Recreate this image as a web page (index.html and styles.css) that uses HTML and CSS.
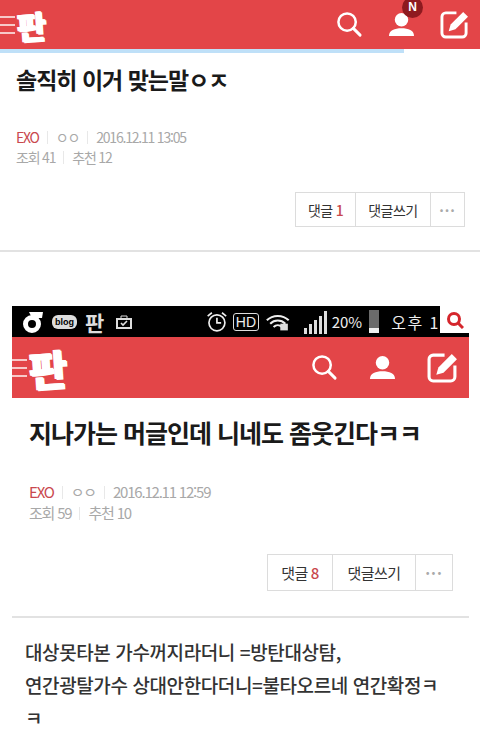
FILE: index.html
```html
<!DOCTYPE html>
<html lang="ko">
<head>
  <meta charset="UTF-8">
  <title>판</title>
  <link rel="stylesheet" href="styles.css">
</head>
<body>

<header class="topbar">
  <div class="brand">
    <div class="burger"><i></i><i></i><i></i></div>
    <span class="logo">판</span>
  </div>
  <div class="tools">
    <svg class="tool" viewBox="0 0 28 28"><circle cx="11.5" cy="11.5" r="9" fill="none" stroke="#fff" stroke-width="2.6"/><path d="M18 18l7 7" stroke="#fff" stroke-width="3" stroke-linecap="round"/></svg>
    <div class="user">
      <svg class="tool" viewBox="0 0 28 28"><circle cx="14" cy="9" r="7" fill="#fff"/><path d="M1 26c0-6 6-8 13-8s13 2 13 8z" fill="#fff"/></svg>
      <span class="badge">N</span>
    </div>
    <svg class="tool tool-edit" viewBox="0 0 30 30"><path d="M17 3H6a4 4 0 0 0-4 4v17a4 4 0 0 0 4 4h17a4 4 0 0 0 4-4V13" fill="none" stroke="#fff" stroke-width="3"/><path d="M9 22l2-7L24 2l5 5-13 13z" fill="#fff"/></svg>
  </div>
</header>
<div class="progress"></div>

<section class="post">
  <h1 class="title">솔직히 이거 맞는말ㅇㅈ</h1>
  <div class="meta">
    <div><span class="cat">EXO</span><span class="sep"></span><span>ㅇㅇ</span><span class="sep"></span><span>2016.12.11 13:05</span></div>
    <div><span>조회 41</span><span class="sep"></span><span>추천 12</span></div>
  </div>
  <div class="actions">
    <span class="btn btn-count">댓글 <b>1</b></span>
    <span class="btn btn-write">댓글쓰기</span>
    <span class="btn btn-more">···</span>
  </div>
</section>

<section class="shot">
  <div class="statusbar">
    <div class="status-left">
      <svg class="carrier" viewBox="0 0 24 24"><path d="M12 5a9 9 0 1 0 0 18 9 9 0 0 0 0-18zm0 5a4 4 0 1 1 0 8 4 4 0 0 1 0-8z" fill="#fff"/><path d="M9 2h14l-1 6H12z" fill="#fff"/></svg>
      <span class="blog">blog</span>
      <span class="mini">판</span>
      <svg class="sicon" viewBox="0 0 18 18"><path d="M2 6h14v9H2z" fill="none" stroke="#ddd" stroke-width="2"/><path d="M6 3h6v3H6z" fill="none" stroke="#ddd"/><path d="M6 10l2 2 4-4" fill="none" stroke="#ddd" stroke-width="1.6"/></svg>
    </div>
    <div class="status-right">
      <svg class="alarm" viewBox="0 0 26 26"><circle cx="13" cy="14" r="9.5" fill="none" stroke="#eee" stroke-width="2"/><path d="M13 8v6h5M2 6l5-4M24 6l-5-4" fill="none" stroke="#eee" stroke-width="2"/></svg>
      <span class="hd">HD</span>
      <svg class="wifi" viewBox="0 0 28 20"><path d="M1 8c7-7 19-7 26 0M5 12c5-5 13-5 18 0M9 16c3-3 7-3 10 0" fill="none" stroke="#eee" stroke-width="2.4"/><path d="M17 12h9v8h-9z" fill="#ddd"/></svg>
      <span class="signal"><i></i><i></i><i></i><i></i><i></i></span>
      <span>20%</span>
      <span class="battery"><i></i></span>
      <span class="clock">오후 1</span>
    </div>
    <div class="status-search">
      <svg viewBox="0 0 18 18"><circle cx="8" cy="8" r="5.5" fill="none" stroke="#d5262c" stroke-width="3"/><path d="M12 12l5 5" stroke="#d5262c" stroke-width="3"/></svg>
    </div>
  </div>
  <div class="topbar topbar-inner">
    <div class="brand">
      <div class="burger"><i></i><i></i><i></i></div>
      <span class="logo">판</span>
    </div>
    <div class="tools">
      <svg class="tool" viewBox="0 0 28 28"><circle cx="11.5" cy="11.5" r="9" fill="none" stroke="#fff" stroke-width="2.6"/><path d="M18 18l7 7" stroke="#fff" stroke-width="3" stroke-linecap="round"/></svg>
      <svg class="tool" viewBox="0 0 28 28"><circle cx="14" cy="9" r="7" fill="#fff"/><path d="M1 26c0-6 6-8 13-8s13 2 13 8z" fill="#fff"/></svg>
      <svg class="tool tool-edit" viewBox="0 0 30 30"><path d="M17 3H6a4 4 0 0 0-4 4v17a4 4 0 0 0 4 4h17a4 4 0 0 0 4-4V13" fill="none" stroke="#fff" stroke-width="3"/><path d="M9 22l2-7L24 2l5 5-13 13z" fill="#fff"/></svg>
    </div>
  </div>

  <div class="shot-post">
    <h2 class="title title-big">지나가는 머글인데 니네도 좀웃긴다ㅋㅋ</h2>
    <div class="meta">
      <div><span class="cat">EXO</span><span class="sep"></span><span>ㅇㅇ</span><span class="sep"></span><span>2016.12.11 12:59</span></div>
      <div><span>조회 59</span><span class="sep"></span><span>추천 10</span></div>
    </div>
    <div class="actions">
      <span class="btn btn-count">댓글 <b>8</b></span>
      <span class="btn btn-write">댓글쓰기</span>
      <span class="btn btn-more">···</span>
    </div>
  </div>

  <p class="body-text">대상못타본 가수꺼지라더니 =방탄대상탐,<br>연간광탈가수 상대안한다더니=불타오르네 연간확정ㅋ<br>ㅋ</p>
</section>

</body>
</html>
```

FILE: styles.css
```css
body {
  margin: 0;
  background: #fff;
  font-family: "Noto Sans CJK KR", "Liberation Sans", sans-serif;
  color: #222;
  overflow: hidden;
}

/* red bar, used twice */
.topbar {
  height: 49px;
  background: #e34548;
  display: flex;
  justify-content: space-between;
  align-items: center;
  padding-right: 11px;
}

.brand {
  display: flex;
  align-items: center;
  gap: 2px;
}

.burger {
  display: flex;
  flex-direction: column;
  gap: 6px;
  width: 15px;
}

.burger i {
  display: block;
  height: 2px;
  background: #f7c9c9;
}

.logo {
  color: #fff;
  font-size: 32px;
  font-weight: 900;
  line-height: 40px;
  transform: rotate(-4deg);
  text-shadow: 1px 1px 0 #fff, -1px 0 0 #fff;
}

.tools {
  display: flex;
  align-items: center;
  gap: 25px;
}

.tool {
  display: block;
  width: 27px;
  height: 27px;
}

.tool-edit {
  width: 29px;
  height: 29px;
}

.user {
  position: relative;
}

.badge {
  position: absolute;
  top: -14px;
  right: -8px;
  width: 21px;
  height: 21px;
  border-radius: 50%;
  background: #8e1a1f;
  color: #fff;
  font-family: "Liberation Sans", sans-serif;
  font-size: 12px;
  font-weight: bold;
  line-height: 21px;
  text-align: center;
}

.progress {
  width: 404px;
  height: 4px;
  background: #bfe0f8;
}

.post {
  padding: 10px 15px 0 16px;
  height: 187px;
  border-bottom: 2px solid #e2e2e2;
}

.title {
  margin: 0;
  font-size: 23px;
  font-weight: 700;
  line-height: 32px;
  letter-spacing: -1px;
  color: #1a1a1a;
}

.meta {
  margin-top: 32px;
  font-size: 14px;
  line-height: 20px;
  letter-spacing: -1.2px;
  color: #a8a8a8;
  white-space: nowrap;
}

.cat {
  color: #c9484e;
}

.sep {
  display: inline-block;
  width: 1px;
  height: 13px;
  margin: 0 8px;
  background: #e8e8e8;
  vertical-align: -1px;
}

.actions {
  display: flex;
  justify-content: flex-end;
  margin-top: 25px;
}

.btn {
  display: flex;
  justify-content: center;
  align-items: center;
  height: 33px;
  border: 1px solid #dcdcdc;
  margin-left: -1px;
  font-size: 14px;
  letter-spacing: -0.5px;
  color: #333;
}

.btn b {
  margin-left: 3px;
  font-weight: 500;
  color: #c9484e;
}

.btn-count { width: 59px; }
.btn-write { width: 74px; }
.btn-more { width: 33px; color: #aaa; font-weight: 700; letter-spacing: 1px; }

.shot {
  margin: 54px 11px 0 12px;
}

.statusbar {
  height: 31px;
  background: #000;
  display: flex;
  align-items: center;
  color: #eee;
  font-size: 15px;
}

.status-left {
  display: flex;
  align-items: center;
  gap: 8px;
  padding-left: 8px;
  width: 194px;
  box-sizing: border-box;
  flex-shrink: 0;
}

.carrier {
  width: 24px;
  height: 26px;
}

.blog {
  background: #ddd;
  color: #000;
  border-radius: 6px;
  font-family: "Liberation Sans", sans-serif;
  font-size: 9px;
  font-weight: bold;
  line-height: 14px;
  padding: 0 3px;
}

.mini {
  font-size: 21px;
  font-weight: 700;
  line-height: 24px;
  color: #ddd;
}

.sicon {
  width: 18px;
  height: 18px;
  margin-left: 3px;
}

.status-right {
  flex: 1;
  display: flex;
  align-items: center;
  gap: 5px;
  overflow: hidden;
  white-space: nowrap;
}

.alarm {
  width: 26px;
  height: 26px;
}

.hd {
  border: 1.5px solid #ddd;
  border-radius: 3px;
  font-family: "Liberation Sans", sans-serif;
  font-size: 14px;
  line-height: 16px;
  padding: 0 2px;
}

.wifi {
  width: 28px;
  height: 20px;
  margin-left: 2px;
  margin-right: 9px;
}

.signal {
  display: flex;
  align-items: flex-end;
  gap: 2px;
  height: 24px;
}

.signal i {
  display: block;
  width: 3px;
  background: #ddd;
}

.signal i:nth-child(1) { height: 6px; }
.signal i:nth-child(2) { height: 10px; }
.signal i:nth-child(3) { height: 14px; }
.signal i:nth-child(4) { height: 18px; }
.signal i:nth-child(5) { height: 23px; }

.battery {
  display: block;
  width: 12px;
  height: 23px;
  background: #6b6b6b;
  margin-left: 2px;
  position: relative;
}

.battery i {
  position: absolute;
  left: 0;
  right: 0;
  bottom: 0;
  height: 5px;
  background: #eee;
}

.clock {
  letter-spacing: 1.5px;
  font-size: 16px;
  margin-left: 7px;
}

.status-search {
  width: 29px;
  height: 27px;
  align-self: flex-start;
  flex-shrink: 0;
  background: #fff;
  display: flex;
  justify-content: center;
  align-items: center;
}

.status-search svg {
  width: 18px;
  height: 18px;
}

.topbar-inner {
  height: 61px;
  padding-right: 11px;
}

.topbar-inner .tools {
  gap: 31px;
}

.topbar-inner .logo {
  font-size: 42px;
}

.topbar-inner .tool-edit {
  width: 31px;
  height: 31px;
}

.shot-post {
  padding: 15px 16px 0 17px;
  height: 203px;
  border-bottom: 2px solid #e2e2e2;
}

.title-big {
  font-size: 25px;
  line-height: 38px;
  letter-spacing: -1px;
}

.shot-post .meta {
  margin-top: 30px;
  line-height: 21px;
  font-size: 15px;
}

.shot-post .actions {
  margin-top: 31px;
}

.shot-post .btn {
  height: 35px;
  font-size: 15px;
}

.shot-post .btn-count { width: 64px; }
.shot-post .btn-write { width: 82px; }
.shot-post .btn-more { width: 36px; }

.body-text {
  margin: 17px 0 0 13px;
  font-size: 19px;
  font-weight: 500;
  line-height: 33px;
  letter-spacing: -0.4px;
  color: #333;
  white-space: nowrap;
}
```
